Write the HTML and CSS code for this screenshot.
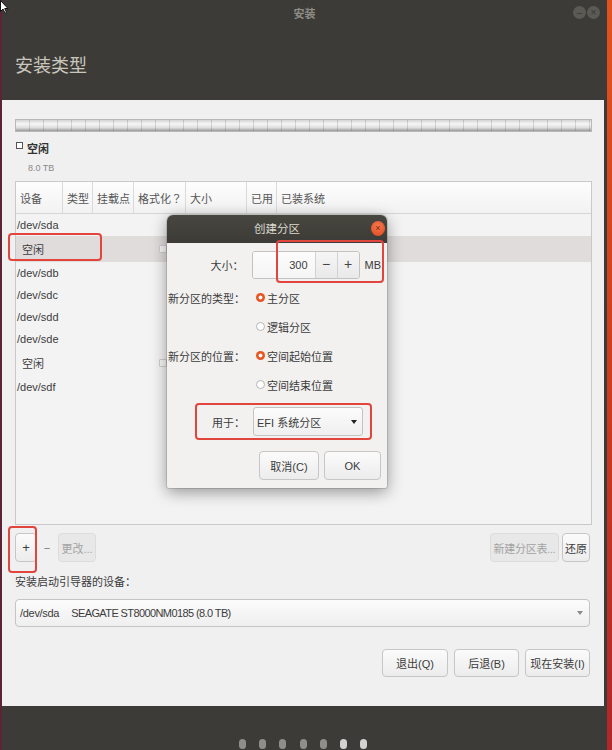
FILE: index.html
```html
<!DOCTYPE html>
<html lang="zh-CN">
<head>
  <meta charset="UTF-8">
  <meta name="viewport" content="width=device-width, initial-scale=1.0">
  <title>安装</title>
  <link rel="stylesheet" href="styles.css">
</head>
<body>
  <div class="edge-left"></div>
  <div class="window">
    <div class="titlebar">
      <span class="win-title">安装</span>
      <div class="win-btns">
        <span class="win-btn">–</span>
        <span class="win-btn">×</span>
      </div>
    </div>
    <div class="header">
      <h1>安装类型</h1>
    </div>
    <div class="content">
      <div class="part-bar"></div>
      <div class="legend">
        <div class="legend-name"><span class="legend-box"></span>空闲</div>
        <div class="legend-size">8.0 TB</div>
      </div>

      <div class="part-table">
        <div class="row head">
          <span>设备</span>
          <span>类型</span>
          <span>挂载点</span>
          <span>格式化<b class="punct">？</b></span>
          <span>大小</span>
          <span>已用</span>
          <span>已装系统</span>
        </div>
        <div class="row dev"><span>/dev/sda</span></div>
        <div class="row free selected"><span>空闲</span><span></span><span></span><span class="fmt"><i class="check"></i></span></div>
        <div class="row dev"><span>/dev/sdb</span></div>
        <div class="row dev"><span>/dev/sdc</span></div>
        <div class="row dev"><span>/dev/sdd</span></div>
        <div class="row dev"><span>/dev/sde</span></div>
        <div class="row free"><span>空闲</span><span></span><span></span><span class="fmt"><i class="check"></i></span></div>
        <div class="row dev"><span>/dev/sdf</span></div>
      </div>

      <div class="tools">
        <button class="btn btn-add">+</button>
        <button class="btn flat btn-remove">−</button>
        <button class="btn disabled btn-change">更改...</button>
        <span class="spacer"></span>
        <button class="btn disabled btn-newtable">新建分区表...</button>
        <button class="btn btn-revert">还原</button>
      </div>

      <div class="boot-label">安装启动引导器的设备<b class="punct">：</b></div>
      <div class="combo boot-combo">
        <span class="combo-dev">/dev/sda</span>
        <span class="combo-disk">SEAGATE ST8000NM0185 (8.0 TB)</span>
        <i class="arrow"></i>
      </div>

      <div class="actions">
        <button class="btn btn-quit">退出(Q)</button>
        <button class="btn btn-back">后退(B)</button>
        <button class="btn btn-install">现在安装(I)</button>
      </div>
    </div>
    <div class="footer">
      <span class="dot"></span>
      <span class="dot"></span>
      <span class="dot"></span>
      <span class="dot"></span>
      <span class="dot"></span>
      <span class="dot light"></span>
      <span class="dot light"></span>
    </div>
  </div>
  <div class="edge-right"></div>

  <!-- 创建分区 对话框 -->
  <div class="dialog">
    <div class="dlg-title">
      创建分区
      <span class="dlg-close">×</span>
    </div>
    <div class="dlg-body">
      <div class="field size">
        <span class="field-label">大小<b class="punct">：</b></span>
        <div class="spin">
          <span class="spin-value">300</span>
          <span class="spin-btn">−</span>
          <span class="spin-btn">+</span>
        </div>
        <span class="unit">MB</span>
      </div>
      <div class="field opt first">
        <span class="field-label">新分区的类型<b class="punct">：</b></span>
        <i class="radio on"></i>主分区
      </div>
      <div class="field opt">
        <span class="field-label"></span>
        <i class="radio"></i>逻辑分区
      </div>
      <div class="field opt">
        <span class="field-label">新分区的位置<b class="punct">：</b></span>
        <i class="radio on"></i>空间起始位置
      </div>
      <div class="field opt">
        <span class="field-label"></span>
        <i class="radio"></i>空间结束位置
      </div>
      <div class="field use">
        <span class="field-label">用于<b class="punct">：</b></span>
        <div class="combo dlg-combo">
          <span>EFI 系统分区</span>
          <i class="arrow dark"></i>
        </div>
      </div>
      <div class="dlg-actions">
        <button class="btn btn-cancel">取消(C)</button>
        <button class="btn btn-ok">OK</button>
      </div>
    </div>
  </div>

  <!-- 红色标注框 -->
  <div class="mark mark-row"></div>
  <div class="mark mark-size"></div>
  <div class="mark mark-use"></div>
  <div class="mark mark-add"></div>

  <svg class="cursor" width="9" height="14" viewBox="0 0 9 14">
    <path d="M0.5 0.5 L0.5 11.5 L3 9 L5 13.2 L6.6 12.5 L4.7 8.5 L8 8.5 Z" fill="#fff" stroke="#111" stroke-width="1"/>
  </svg>
</body>
</html>
```

FILE: styles.css
```css
* {
  box-sizing: border-box;
}
body {
  margin: 0;
  width: 612px;
  height: 750px;
  overflow: hidden;
  position: relative;
  display: flex;
  font: 11px "Liberation Sans", "Noto Sans CJK SC", sans-serif;
  color: #3c3c3c;
  background: #3c3b37;
}
/* 全角标点居中显示 */
.punct {
  font-family: "Noto Sans CJK TC", sans-serif;
  font-weight: normal;
}
.edge-left {
  width: 2px;
  background: #5e2237;
}
.edge-right {
  flex: 1;
  background: linear-gradient(#e0531f, #cc3b1e 55%, #b0272b);
}
.window {
  width: 605px;
  display: flex;
  flex-direction: column;
  background: #3c3b37;
}

/* 标题栏 */
.titlebar {
  height: 25px;
  position: relative;
  display: flex;
  align-items: center;
  justify-content: center;
}
.win-title {
  color: #8e8c86;
  font-weight: bold;
}
.win-btns {
  position: absolute;
  right: 7px;
  top: 6px;
  display: flex;
  gap: 1px;
}
.win-btn {
  width: 13px;
  height: 13px;
  border-radius: 50%;
  background: #5b5a55;
  color: #3a3935;
  font-size: 10px;
  line-height: 13px;
  text-align: center;
}
.header {
  height: 75px;
  padding: 30px 0 0 13px;
}
.header h1 {
  margin: 0;
  font-size: 18px;
  font-weight: normal;
  line-height: 22px;
  color: #c9c6bd;
}

/* 内容区 */
.content {
  height: 606px;
  margin-right: 3px;
  background: #f0f0f0;
  padding: 19px 12px 0 13px;
}
.part-bar {
  height: 13px;
  border: 1px solid #b8b8b8;
  background:
    repeating-linear-gradient(to right, transparent 0 13px, rgba(0, 0, 0, 0.13) 13px 14px),
    linear-gradient(#d4d4d4, #f6f6f6 35%, #dedede 70%, #9a9a9a);
}
.legend {
  margin-top: 9px;
}
.legend-name {
  display: flex;
  align-items: flex-start;
  gap: 4px;
  font-weight: bold;
  line-height: 16px;
  color: #333;
}
.legend-box {
  width: 7px;
  height: 7px;
  margin: 1px 0 0 1px;
  border: 1px solid #555;
  background: #fff;
}
.legend-size {
  margin-top: 4px;
  padding-left: 13px;
  font-size: 9px;
  line-height: 14px;
  color: #8a8a8a;
}

/* 分区表 */
.part-table {
  margin-top: 6px;
  height: 344px;
  border: 1px solid #c9c9c9;
  background: #f3f3f3;
}
.row {
  display: grid;
  grid-template-columns: 47px 30px 41px 52px 61px 30px 1fr;
  align-items: center;
}
.row span {
  white-space: nowrap;
}
.row.head {
  height: 32px;
  align-items: stretch;
  border-bottom: 1px solid #d6d6d6;
  background: linear-gradient(#fdfdfd, #f2f2f2);
  color: #555;
}
.row.head span {
  display: flex;
  align-items: center;
  padding-left: 4px;
  border-right: 1px solid #dadada;
}
.row.head span:last-child {
  border-right: none;
}
.row.dev {
  height: 22px;
  padding-left: 1px;
}
.row.free {
  height: 26px;
  padding-left: 6px;
}
.row.free .fmt {
  display: flex;
  justify-content: center;
  margin-left: -6px;
}
.row.selected {
  background: #e1dcdc;
}
.check {
  width: 8px;
  height: 8px;
  border: 1px solid #cfcfcf;
  border-radius: 1px;
  background: #f7f7f7;
}

/* 按钮 */
.btn {
  font: inherit;
  color: #3c3c3c;
  height: 29px;
  padding: 0;
  border: 1px solid #c6c6c6;
  border-radius: 4px;
  background: linear-gradient(#fbfbfb, #ececec);
  white-space: nowrap;
}
.btn.flat {
  border-color: transparent;
  background: none;
  color: #777;
}
.btn.disabled {
  color: #a3a3a3;
  background: #e8e8e8;
  border-color: #dcdcdc;
}
.tools {
  margin-top: 8px;
  height: 29px;
  display: flex;
  padding-right: 2px;
}
.tools .spacer {
  flex: 1;
}
.btn-add {
  width: 22px;
  font-size: 13px;
}
.btn-remove {
  width: 16px;
  margin-left: 2px;
}
.btn-change {
  width: 38px;
  margin-left: 3px;
}
.btn-newtable {
  width: 69px;
  letter-spacing: -0.3px;
}
.btn-revert {
  width: 28px;
  margin-left: 3px;
}
.boot-label {
  margin-top: 12px;
  line-height: 14px;
}
.combo {
  display: flex;
  align-items: center;
  border: 1px solid #c4c4c4;
  border-radius: 4px;
  background: linear-gradient(#fcfcfc, #efefef);
}
.boot-combo {
  margin-top: 10px;
  width: 575px;
  height: 28px;
  padding-left: 4px;
}
.combo-dev {
  letter-spacing: -0.3px;
}
.combo-disk {
  margin-left: 12px;
  letter-spacing: -0.6px;
}
.arrow {
  margin-left: auto;
  margin-right: 6px;
  width: 0;
  height: 0;
  border-left: 3.5px solid transparent;
  border-right: 3.5px solid transparent;
  border-top: 4px solid #8a8a8a;
}
.arrow.dark {
  border-top-color: #222;
  margin-right: 5px;
}
.actions {
  margin-top: 22px;
  display: flex;
  justify-content: flex-end;
  gap: 6px;
  padding-right: 2px;
}
.actions .btn {
  height: 28px;
  width: 65px;
}
.actions .btn-quit {
  width: 66px;
}
.footer {
  flex: 1;
  display: flex;
  justify-content: center;
  align-items: flex-end;
  gap: 13.3px;
  padding: 0 3px 1px 0;
}
.dot {
  width: 7px;
  height: 10px;
  border-radius: 3.5px;
  background: #8f8e89;
}
.dot.light {
  background: #d2d2d0;
}

/* 对话框 */
.dialog {
  position: absolute;
  left: 167px;
  top: 215px;
  width: 220px;
  height: 273px;
  background: #f2f1f0;
  border-radius: 6px 6px 2px 2px;
  box-shadow: 0 4px 16px rgba(0, 0, 0, 0.4), 0 0 0 1px rgba(0, 0, 0, 0.12);
}
.dlg-title {
  position: relative;
  height: 28px;
  border-radius: 6px 6px 0 0;
  background: linear-gradient(#47463f, #3c3b37);
  color: #dcd9d0;
  text-align: center;
  line-height: 28px;
  font-size: 11.5px;
}
.dlg-close {
  position: absolute;
  left: 204px;
  top: 6px;
  width: 14px;
  height: 15px;
  border-radius: 50%;
  background: radial-gradient(circle at 50% 35%, #f47a50, #df451b);
  color: #7a2410;
  font-size: 9px;
  line-height: 15px;
}
.dlg-body {
  padding: 8px 6px 8px 0;
}
.field {
  display: flex;
  align-items: center;
}
.field-label {
  width: 78px;
  margin-right: 8px;
  text-align: right;
}
.field.size {
  height: 28px;
}
.field.opt {
  height: 29px;
}
.field.opt.first {
  margin-top: 4px;
}
.field.use {
  margin-top: 8px;
  height: 29px;
}
.spin {
  display: flex;
  width: 110px;
  height: 28px;
  border: 1px solid #c2c2c2;
  border-radius: 3px;
  overflow: hidden;
}
.spin-value {
  flex: 1;
  background: linear-gradient(#fcfcfc, #f5f5f5);
  text-align: right;
  padding-right: 7px;
  line-height: 26px;
}
.spin-btn {
  width: 22px;
  border-left: 1px solid #d2d2d2;
  background: linear-gradient(#f6f6f6, #e9e9e9);
  text-align: center;
  line-height: 25px;
  font-size: 14px;
  color: #444;
}
.unit {
  margin-left: 5px;
}
.radio {
  width: 9px;
  height: 9px;
  margin: 0 2px 0 3px;
  border-radius: 50%;
  border: 1px solid #b5b5b5;
  background: #fff;
}
.radio.on {
  border: none;
  background: radial-gradient(circle, #fff 0 1.6px, #e95420 2.3px);
}
.dlg-combo {
  width: 110px;
  height: 29px;
  padding-left: 3px;
  border-radius: 3px;
}
.dlg-actions {
  margin-top: 15px;
  display: flex;
  justify-content: flex-end;
  gap: 5px;
}
.btn-cancel {
  width: 60px;
}
.btn-ok {
  width: 57px;
}

/* 标注 */
.mark {
  position: absolute;
  border: 2px solid #e2443e;
  border-radius: 4px;
}
.mark-row {
  left: 8px;
  top: 233px;
  width: 94px;
  height: 28px;
}
.mark-size {
  left: 276px;
  top: 240px;
  width: 108px;
  height: 43px;
}
.mark-use {
  left: 195px;
  top: 403px;
  width: 177px;
  height: 37px;
}
.mark-add {
  left: 8px;
  top: 526px;
  width: 29px;
  height: 47px;
}
.cursor {
  position: absolute;
  left: 0;
  top: 0;
}
```
